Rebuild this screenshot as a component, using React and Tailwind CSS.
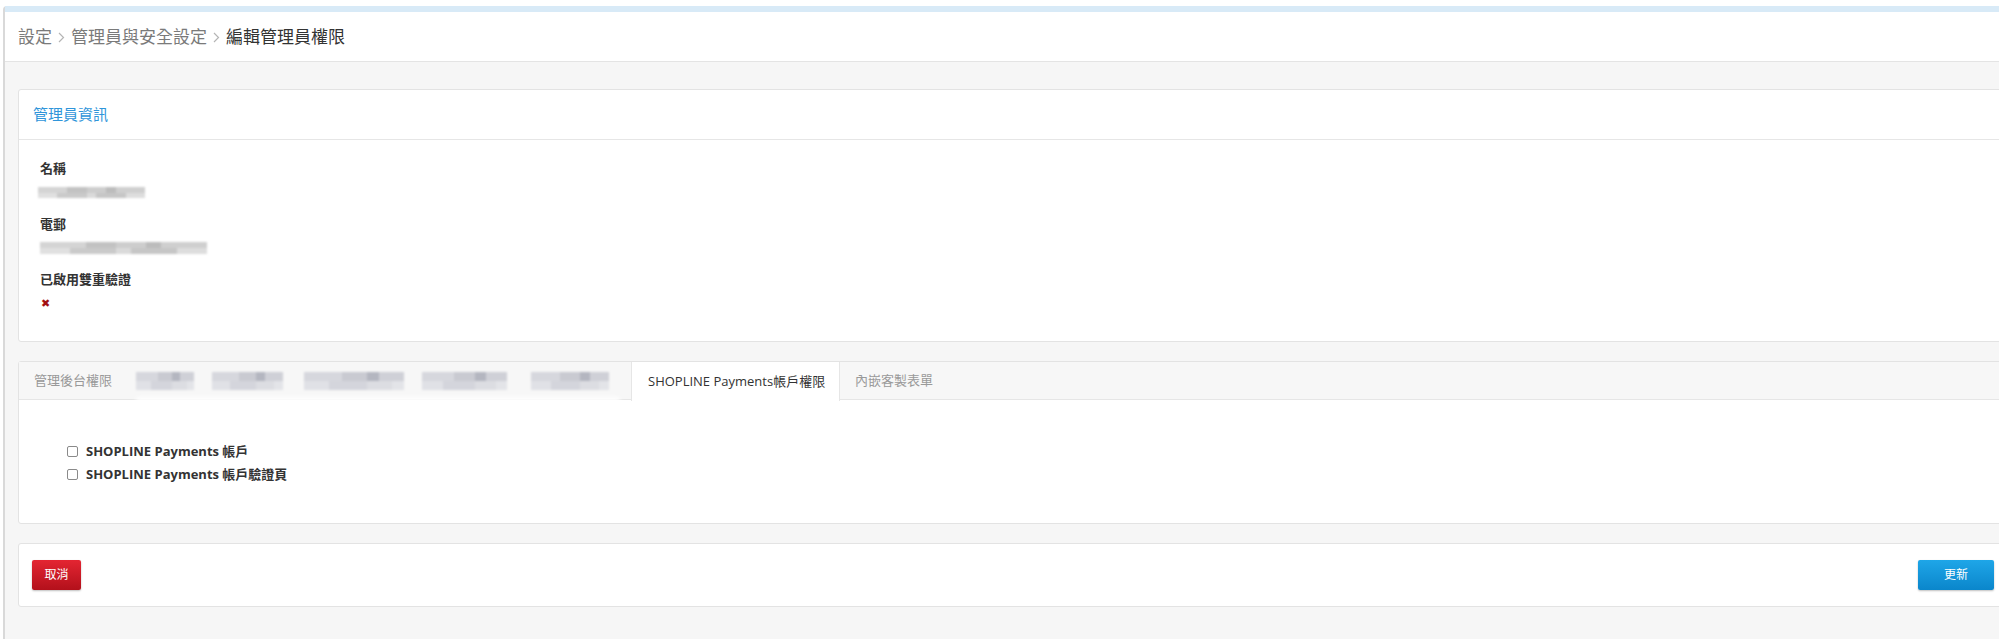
import React from 'react'

const font = { fontFamily: '"Open Sans", "Noto Sans CJK TC", sans-serif' }

function Chevron() {
  return (
    <svg width="7" height="11" viewBox="0 0 7 11" className="mx-[6px] mt-[2px]">
      <path d="M1 1l4.5 4.5L1 10" fill="none" stroke="#b5b5b5" strokeWidth="1.2" />
    </svg>
  )
}

function Blur({ w, h = 11, className = '' }) {
  return (
    <div className={`flex flex-col blur-[1px] ${className}`} style={{ width: w }}>
      <div className="flex" style={{ height: h / 2 }}>
        <div className="flex-[3] bg-[#d4d4d4]" />
        <div className="flex-[2] bg-[#c2c2c2]" />
        <div className="flex-[2] bg-[#cdcdcd]" />
        <div className="flex-[1] bg-[#bcbcbc]" />
        <div className="flex-[3] bg-[#cfcfcf]" />
      </div>
      <div className="flex" style={{ height: h / 2 }}>
        <div className="flex-[2] bg-[#e0e0e0]" />
        <div className="flex-[3] bg-[#cacaca]" />
        <div className="flex-[1] bg-[#dadada]" />
        <div className="flex-[3] bg-[#c6c6c6]" />
        <div className="flex-[2] bg-[#dddddd]" />
      </div>
    </div>
  )
}

function BlurTab({ w, ml }) {
  return (
    <div className="flex flex-col blur-[1px]" style={{ width: w, marginLeft: ml }}>
      <div className="flex h-[9px]">
        <div className="flex-[3] bg-[#d6d7dd]" />
        <div className="flex-[2] bg-[#c9cad1]" />
        <div className="flex-[1] bg-[#b4b6c0]" />
        <div className="flex-[2] bg-[#cfd0d7]" />
      </div>
      <div className="flex h-[9px]">
        <div className="flex-[2] bg-[#e0e1e6]" />
        <div className="flex-[3] bg-[#d4d5dc]" />
        <div className="flex-[2] bg-[#dcdde2]" />
        <div className="flex-[1] bg-[#e3e4e8]" />
      </div>
    </div>
  )
}

function Check({ label }) {
  return (
    <label className="flex items-center h-[23px]">
      <input
        type="checkbox"
        className="appearance-none m-0 w-[11px] h-[11px] border border-[#8a8a8a] rounded-[2px] bg-white"
      />
      <span className="ml-[8px] text-[13px] font-bold text-[#333]">{label}</span>
    </label>
  )
}

export default function App() {
  return (
    <div className="w-[1999px] h-[639px] overflow-hidden bg-white" style={font}>
      <div className="ml-[3px] mt-[6px] w-[2018px] h-[633px] flex flex-col border-l-2 border-[#d9d9d9] rounded-tl-[4px]">
        <div className="h-[6px] bg-[#d8eaf7]" />
        <div className="h-[50px] shrink-0 flex items-center pl-[13px] bg-white border-b border-[#e4e4e4] text-[17px]">
          <span className="text-[#7a7a7a]">設定</span>
          <Chevron />
          <span className="text-[#7a7a7a]">管理員與安全設定</span>
          <Chevron />
          <span className="text-[#333]">編輯管理員權限</span>
        </div>

        <main className="flex-1 bg-[#f6f6f6] pt-[27px] pl-[13px] pr-[13px] flex flex-col">
          <section className="bg-white border border-[#e3e3e3] rounded-[3px]">
            <div className="h-[50px] flex items-center pl-[14px] border-b border-[#e6e6e6] text-[15px] text-[#2f95da]">
              管理員資訊
            </div>
            <div className="pl-[21px] pt-[18px] pb-[22px] text-[13px] text-[#333] font-semibold">
              <div className="h-[20px] leading-[20px]">名稱</div>
              <div className="h-[26px] flex items-center -ml-[2px] pt-[3px]">
                <Blur w={107} />
              </div>
              <div className="h-[20px] leading-[20px] mt-[10px]">電郵</div>
              <div className="h-[26px] flex items-center pt-[1px]">
                <Blur w={167} h={12} />
              </div>
              <div className="h-[20px] leading-[20px] mt-[9px]">已啟用雙重驗證</div>
              <div className="h-[30px] flex items-center pl-[1px]">
                <span className="text-[11px] text-[#a30f12]" style={{ fontFamily: '"DejaVu Sans", sans-serif' }}>✖</span>
              </div>
            </div>
          </section>

          <section className="mt-[19px] bg-white border border-[#e3e3e3] rounded-[3px]">
            <div className="h-[38px] flex bg-[#f7f7f7] border-b border-[#e6e6e6] text-[13px]">
              <div className="w-[108px] pl-[15px] flex items-center text-[#999]">管理後台權限</div>
              <div className="relative w-[504px] flex items-center">
                <BlurTab w={58} ml={9} />
                <BlurTab w={71} ml={18} />
                <BlurTab w={100} ml={21} />
                <BlurTab w={85} ml={18} />
                <BlurTab w={78} ml={24} />
                <div className="absolute left-[9px] w-[484px] -bottom-[10px] h-[12px] bg-white/90 blur-[2px]" />
              </div>
              <div className="h-[39px] -mb-px w-[209px] pl-[16px] flex items-center bg-white border-x border-[#e6e6e6] text-[#333]">
                SHOPLINE Payments帳戶權限
              </div>
              <div className="pl-[15px] flex items-center text-[#9a9a9a]">內嵌客製表單</div>
            </div>
            <div className="pl-[48px] pt-[40px] pb-[37px]">
              <Check label="SHOPLINE Payments 帳戶" />
              <Check label="SHOPLINE Payments 帳戶驗證頁" />
            </div>
          </section>

          <section className="mt-[19px] h-[64px] bg-white border border-[#e3e3e3] rounded-[3px] flex items-center justify-between pl-[13px] pr-[13px]">
            <button className="w-[49px] h-[30px] rounded-[2px] text-[12px] text-white bg-gradient-to-b from-[#e42532] to-[#b3101b] shadow-[0_1px_2px_rgba(0,0,0,0.25)]">
              取消
            </button>
            <button className="w-[76px] h-[30px] rounded-[2px] text-[12px] text-white bg-gradient-to-b from-[#1ea6e8] to-[#0a86cb] shadow-[0_1px_2px_rgba(0,0,0,0.25)]">
              更新
            </button>
          </section>
        </main>
      </div>
    </div>
  )
}
